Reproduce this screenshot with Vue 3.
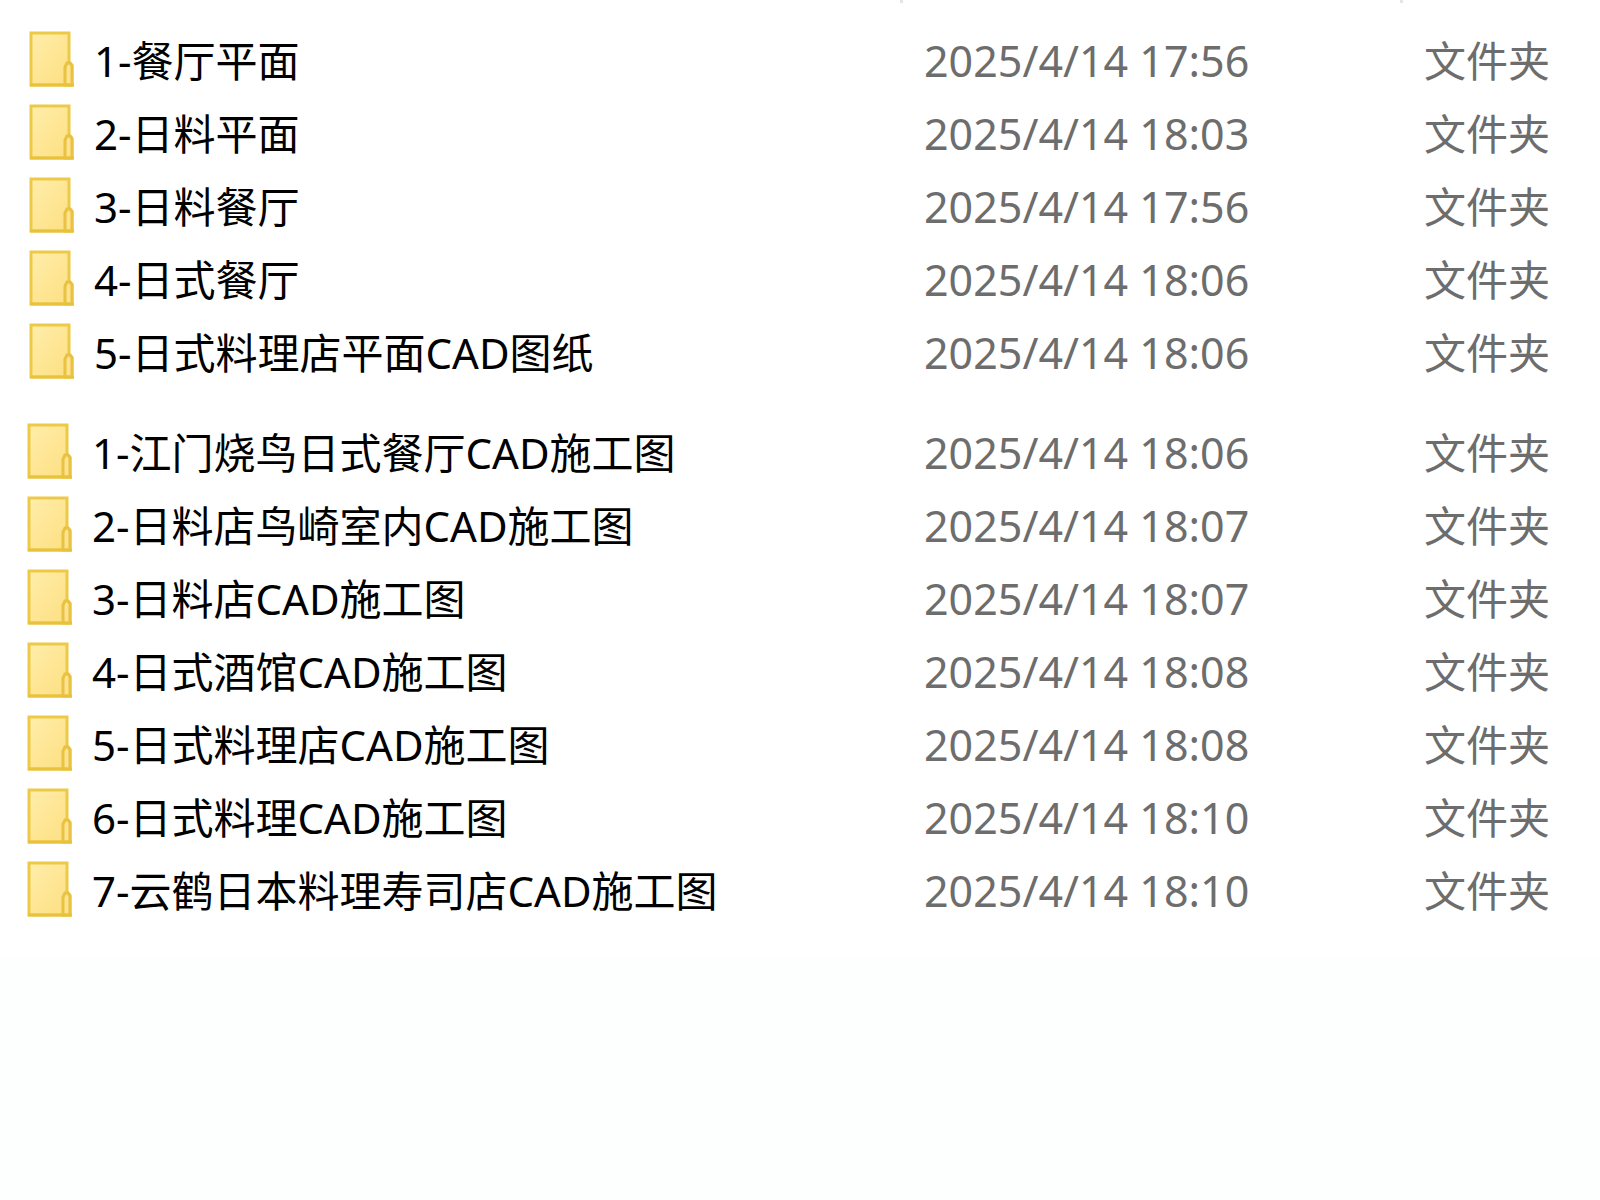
<template>
	<main class="explorer">
		<div class="column-edges">
			<span></span>
			<span class="edge"></span>
			<span class="edge"></span>
		</div>

		<table v-for="(group, index) in groups" :key="index" class="file-list" :class="{ shifted: index > 0 }">
			<colgroup>
				<col>
				<col class="col-date">
				<col class="col-type">
			</colgroup>
			<tbody>
				<tr v-for="item in group" :key="item.name">
					<td>
						<div class="file-name">
							<svg class="folder" viewBox="0 0 46 56" aria-hidden="true">
								<defs>
									<linearGradient :id="`folder-${index}`" x1="0" y1="0" x2="1" y2="1">
										<stop offset="0" stop-color="#ffedaa" />
										<stop offset="1" stop-color="#fddf80" />
									</linearGradient>
								</defs>
								<path d="M2 2H40V31L43 34V54H2Z" :fill="`url(#folder-${index})`" stroke="#edc948" stroke-width="3" />
								<path d="M36 54V36L38 32H41L43 35V54Z" fill="#fde390" stroke="#e8c240" stroke-width="3" />
								<path d="M1 54H45" stroke="#e9c23c" stroke-width="3" />
							</svg>
							<span>{{ item.name }}</span>
						</div>
					</td>
					<td class="date">{{ item.date }}</td>
					<td class="type">文件夹</td>
				</tr>
			</tbody>
		</table>

		<div class="blank"></div>
	</main>
</template>

<script setup>
const groups = [
	[
		{ name: '1-餐厅平面', date: '2025/4/14 17:56' },
		{ name: '2-日料平面', date: '2025/4/14 18:03' },
		{ name: '3-日料餐厅', date: '2025/4/14 17:56' },
		{ name: '4-日式餐厅', date: '2025/4/14 18:06' },
		{ name: '5-日式料理店平面CAD图纸', date: '2025/4/14 18:06' },
	],
	[
		{ name: '1-江门烧鸟日式餐厅CAD施工图', date: '2025/4/14 18:06' },
		{ name: '2-日料店鸟崎室内CAD施工图', date: '2025/4/14 18:07' },
		{ name: '3-日料店CAD施工图', date: '2025/4/14 18:07' },
		{ name: '4-日式酒馆CAD施工图', date: '2025/4/14 18:08' },
		{ name: '5-日式料理店CAD施工图', date: '2025/4/14 18:08' },
		{ name: '6-日式料理CAD施工图', date: '2025/4/14 18:10' },
		{ name: '7-云鹤日本料理寿司店CAD施工图', date: '2025/4/14 18:10' },
	],
]
</script>

<style>
body {
	margin: 0;
	background: #fff;
}
</style>

<style scoped>
.explorer {
	display: flex;
	flex-direction: column;
	min-height: 100vh;
	font-family: "Noto Sans", "Noto Sans CJK SC", sans-serif;
	font-size: 42px;
	line-height: 56px;
	color: #000;
}

.column-edges {
	display: grid;
	grid-template-columns: 1fr 500px 200px;
	height: 3px;
	margin-bottom: 21px;
}

.edge {
	width: 3px;
	background: #e4e4e4;
}

.file-list {
	width: 100%;
	table-layout: fixed;
	border-collapse: collapse;
}

.file-list.shifted {
	margin-top: 27px;
}

.col-date {
	width: 500px;
}

.col-type {
	width: 200px;
}

tr {
	height: 73px;
}

td {
	padding: 0;
	white-space: nowrap;
}

.file-name {
	display: flex;
	align-items: center;
	gap: 19px;
	padding-left: 29px;
}

.shifted .file-name {
	padding-left: 27px;
}

.folder {
	flex: none;
	width: 46px;
	height: 56px;
	margin-bottom: 4px;
}

.date,
.type {
	color: #6d6d6d;
}

.date {
	padding-left: 24px;
	font-size: 43px;
}

.type {
	padding-left: 24px;
}

.blank {
	flex: 1;
	margin-top: 31px;
	background: #fcfffe;
}
</style>
